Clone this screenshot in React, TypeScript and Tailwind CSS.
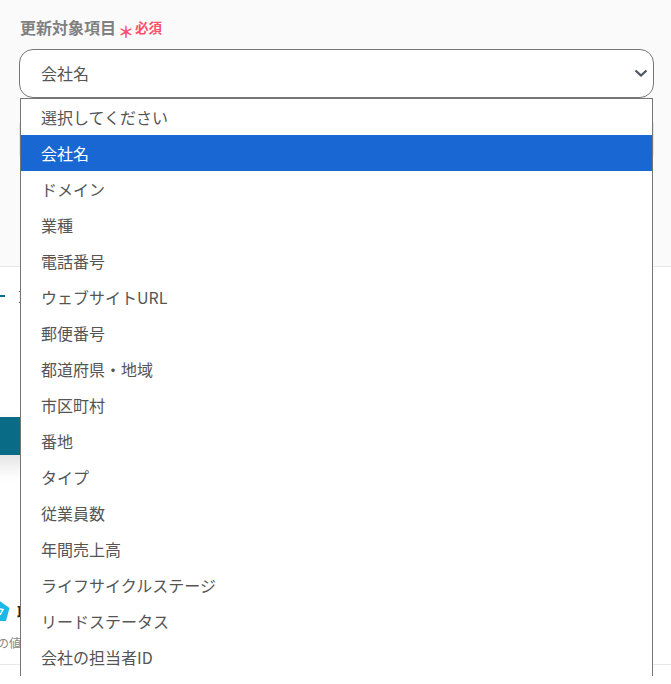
const FONT = "font-['Noto_Sans_CJK_JP','Noto_Sans',sans-serif]"

const options = [
  '選択してください',
  '会社名',
  'ドメイン',
  '業種',
  '電話番号',
  'ウェブサイトURL',
  '郵便番号',
  '都道府県・地域',
  '市区町村',
  '番地',
  'タイプ',
  '従業員数',
  '年間売上高',
  'ライフサイクルステージ',
  'リードステータス',
  '会社の担当者ID',
]

function OptionList() {
  return (
    <ul className="absolute left-[20px] top-[98px] w-[633px] h-[578px] overflow-hidden border border-b-0 border-[#767676] bg-white">
      {options.map((option) => (
        <li
          key={option}
          className={
            option === '会社名'
              ? 'h-[36px] pl-[20px] flex items-center text-[16px] text-white bg-[#1967d2]'
              : 'h-[36px] pl-[20px] flex items-center text-[16px] text-[#555555]'
          }
        >
          {option}
        </li>
      ))}
    </ul>
  )
}

export default function App() {
  return (
    <div className={`relative h-[684px] w-[671px] overflow-hidden bg-white ${FONT}`}>
      <section className="h-[267px] border-b border-[#e8e8e8] bg-[#fafafa] px-[19px] pt-[17px]">
        <div className="flex h-[20px] items-center">
          <span className="ml-[1px] text-[16px] font-semibold text-[#808080]">更新対象項目</span>
          <span className="ml-[2px] mt-[7px] text-[16px] font-bold leading-none text-[#f9506b]">＊</span>
          <span className="ml-[1px] text-[13.5px] font-semibold text-[#f9506b]">必須</span>
        </div>
        <div className="mt-[12px] flex h-[49px] w-[635px] items-center justify-between rounded-[14px] border border-[#767676] bg-white pb-[2px] pl-[21px] pr-[1px]">
          <span className="text-[16px] text-[#555555]">会社名</span>
          <svg width="20" height="20" viewBox="0 0 20 20" fill="none" className="mr-[1px]">
            <path d="M4.5 7.5L10 12.5L15.5 7.5" stroke="#4b5563" strokeWidth="2.2" />
          </svg>
        </div>
        <div className="mt-[22px] h-[38px] w-[635px] rounded-[4px] border border-[#e4e4e4] bg-white" />
      </section>

      <div className="flex h-[398px] flex-col">
        <div className="mt-[21px] flex h-[16px] items-center">
          <span className="h-[2px] w-[5px] bg-[#0a6f8a]" />
          <span className="ml-[13px] text-[13px] text-[#0a6f8a]">更</span>
        </div>
        <div className="-ml-[100px] mt-[113px] h-[40px] w-[300px] rounded-[6px] bg-[#0a6b87] shadow-[0_10px_20px_rgba(0,0,0,0.12)]" />
        <div className="mt-[145px] flex h-[22px] items-center">
          <svg width="10" height="22" viewBox="0 0 10 22" className="shrink-0">
            <path d="M-1 0.5L9.5 8L6 21H-6L-9 8Z" fill="#1cb8e8" />
            <path d="M-3 8.5L3 9.5L0 15" stroke="#ffffff" strokeWidth="1.5" fill="none" />
          </svg>
          <span className="ml-[7px] text-[14px] font-bold text-[#222222]">取得</span>
        </div>
        <span className="-ml-[3px] mt-[12px] text-[12px] text-[#888888]">の値</span>
        <div className="mt-[12px] border-b border-[#e8e8e8]" />
      </div>

      <OptionList />
    </div>
  )
}
